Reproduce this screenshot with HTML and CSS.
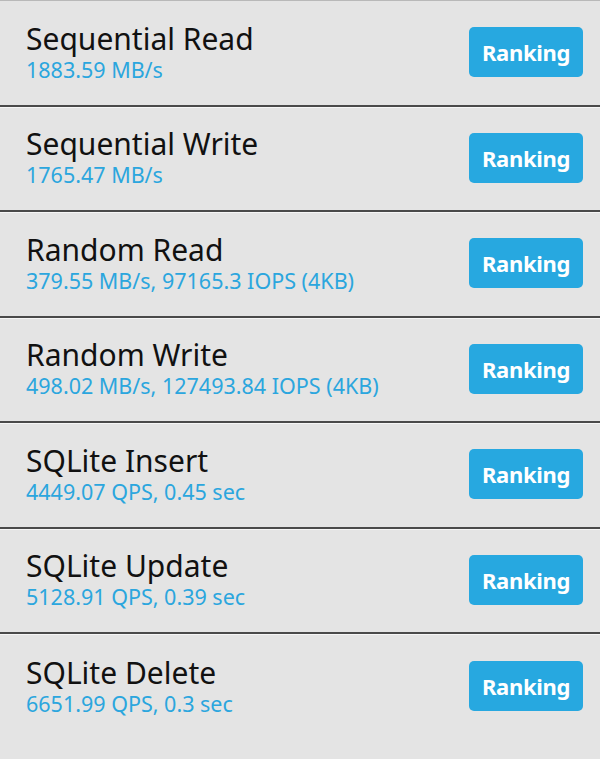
FILE: index.html
```html
<!DOCTYPE html>
<html lang="en">
<head>
    <meta charset="UTF-8">
    <meta name="viewport" content="width=device-width, initial-scale=1.0">
    <title>Storage Benchmark</title>
    <link rel="stylesheet" href="styles.css">
</head>
<body>

<div class="result-list">
    <!-- Sequential tests -->
    <div class="result-row">
        <div class="result-info">
            <div class="result-name">Sequential Read</div>
            <div class="result-value">1883.59 MB/s</div>
        </div>
        <button class="rank-button">Ranking</button>
    </div>
    <div class="result-row">
        <div class="result-info">
            <div class="result-name">Sequential Write</div>
            <div class="result-value">1765.47 MB/s</div>
        </div>
        <button class="rank-button">Ranking</button>
    </div>

    <!-- Random tests -->
    <div class="result-row">
        <div class="result-info">
            <div class="result-name">Random Read</div>
            <div class="result-value">379.55 MB/s, 97165.3 IOPS (4KB)</div>
        </div>
        <button class="rank-button">Ranking</button>
    </div>
    <div class="result-row">
        <div class="result-info">
            <div class="result-name">Random Write</div>
            <div class="result-value">498.02 MB/s, 127493.84 IOPS (4KB)</div>
        </div>
        <button class="rank-button">Ranking</button>
    </div>

    <!-- SQLite tests -->
    <div class="result-row">
        <div class="result-info">
            <div class="result-name">SQLite Insert</div>
            <div class="result-value">4449.07 QPS, 0.45 sec</div>
        </div>
        <button class="rank-button">Ranking</button>
    </div>
    <div class="result-row">
        <div class="result-info">
            <div class="result-name">SQLite Update</div>
            <div class="result-value">5128.91 QPS, 0.39 sec</div>
        </div>
        <button class="rank-button">Ranking</button>
    </div>
    <div class="result-row">
        <div class="result-info">
            <div class="result-name">SQLite Delete</div>
            <div class="result-value">6651.99 QPS, 0.3 sec</div>
        </div>
        <button class="rank-button">Ranking</button>
    </div>
</div>

</body>
</html>
```

FILE: styles.css
```css
/* Global Styling */
* {
    margin: 0;
    padding: 0;
    box-sizing: border-box;
    font-family: "Noto Sans", "Open Sans", sans-serif;
}

body {
    background-color: #e4e4e4;
    color: #111;
}

/* List */
.result-list {
    border-top: 1px solid #b8b8b8;
}

.result-row {
    display: flex;
    justify-content: space-between;
    align-items: center;
    height: 105.5px;
    padding: 0 17px 0 26px;
    border-bottom: 2px solid #4a4a4a;
    box-shadow: 0 1px 0 #f6f6f6;
}

.result-row:last-child {
    border-bottom: none;
    box-shadow: none;
}

.result-info {
    margin-bottom: 1px;
}

.result-name {
    font-size: 30px;
    line-height: 32px;
    color: #111;
}

.result-value {
    margin-top: 2px;
    font-size: 21.5px;
    line-height: 25px;
    color: #2ba6de;
}

/* Ranking Button */
.rank-button {
    width: 114px;
    height: 50px;
    margin-top: -1px;
    background-color: #27a8e0;
    border: none;
    border-radius: 5px;
    color: #fff;
    font-size: 22px;
    font-weight: bold;
    letter-spacing: -0.3px;
    cursor: pointer;
}
```
